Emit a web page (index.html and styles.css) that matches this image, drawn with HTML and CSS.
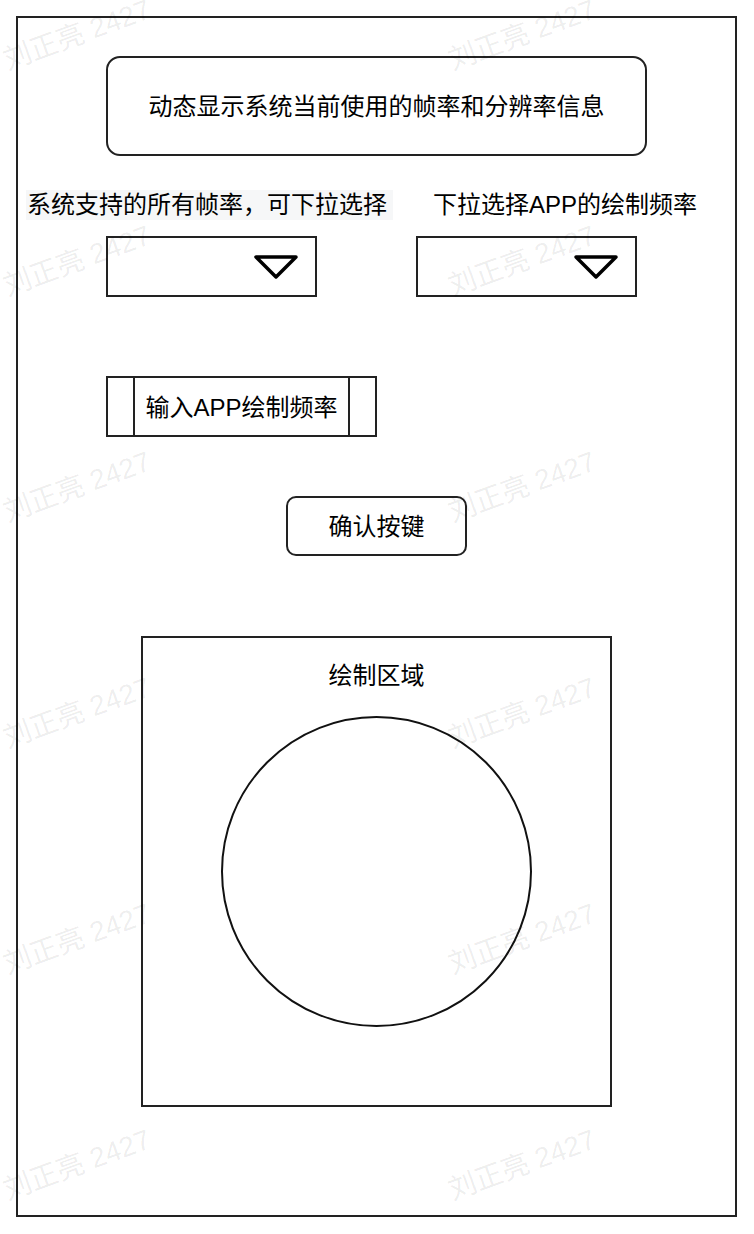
FILE: index.html
```html
<!DOCTYPE html>
<html lang="zh-CN">
<head>
    <meta charset="UTF-8">
    <meta name="viewport" content="width=device-width, initial-scale=1.0">
    <title>帧率设置</title>
    <link rel="stylesheet" href="styles.css">
</head>
<body>
    <div class="frame">
        <div class="title-box">动态显示系统当前使用的帧率和分辨率信息</div>

        <div class="label-row">
            <span class="label label-left">系统支持的所有帧率，可下拉选择</span>
            <span class="label label-right">下拉选择APP的绘制频率</span>
        </div>

        <div class="select-row">
            <div class="select select-left">
                <svg class="arrow" width="46" height="26" viewBox="0 0 46 26">
                    <polygon points="3,3 43,3 23,23" fill="none" stroke="#000" stroke-width="3.5" stroke-linejoin="round"/>
                </svg>
            </div>
            <div class="select select-right">
                <svg class="arrow" width="46" height="26" viewBox="0 0 46 26">
                    <polygon points="3,3 43,3 23,23" fill="none" stroke="#000" stroke-width="3.5" stroke-linejoin="round"/>
                </svg>
            </div>
        </div>

        <div class="input-box">
            <span class="side"></span>
            <span class="input-text">输入APP绘制频率</span>
            <span class="side"></span>
        </div>

        <button class="confirm">确认按键</button>

        <div class="draw-area">
            <span class="draw-label">绘制区域</span>
            <div class="circle"></div>
        </div>
    </div>

    <div class="watermarks">
        <span class="wm">刘正亮 2427</span><span class="wm">刘正亮 2427</span>
        <span class="wm">刘正亮 2427</span><span class="wm">刘正亮 2427</span>
        <span class="wm">刘正亮 2427</span><span class="wm">刘正亮 2427</span>
        <span class="wm">刘正亮 2427</span><span class="wm">刘正亮 2427</span>
        <span class="wm">刘正亮 2427</span><span class="wm">刘正亮 2427</span>
        <span class="wm">刘正亮 2427</span><span class="wm">刘正亮 2427</span>
    </div>
</body>
</html>
```

FILE: styles.css
```css
body {
    margin: 0;
    padding: 16px;
    background-color: #fff;
    color: #000;
    font-family: "Liberation Sans", "Noto Sans CJK SC", sans-serif;
    font-size: 24px;
    position: relative;
    min-height: 1234px;
    box-sizing: border-box;
}

.frame {
    width: 721px;
    height: 1201px;
    box-sizing: border-box;
    border: 2px solid #222;
    display: flex;
    flex-direction: column;
}

.title-box {
    align-self: center;
    margin-top: 38px;
    width: 541px;
    height: 100px;
    box-sizing: border-box;
    border: 2px solid #222;
    border-radius: 14px;
    display: flex;
    align-items: center;
    justify-content: center;
    padding-bottom: 3px;
}

.label-row {
    display: flex;
    margin-top: 34px;
    line-height: 30px;
    height: 30px;
}

.label {
    white-space: nowrap;
}

.label-left {
    margin-left: 8px;
    padding: 0 6px 0 1px;
    background-color: #f6f7f8;
}

.label-right {
    margin-left: 40px;
}

.select-row {
    display: flex;
    margin-top: 16px;
}

.select {
    height: 61px;
    box-sizing: border-box;
    border: 2px solid #222;
    display: flex;
    align-items: center;
    justify-content: flex-end;
    padding-right: 16px;
}

.select-left {
    margin-left: 88px;
    width: 211px;
}

.select-right {
    margin-left: 99px;
    width: 221px;
}

.arrow {
    display: block;
}

.input-box {
    margin-top: 79px;
    margin-left: 88px;
    width: 271px;
    height: 61px;
    box-sizing: border-box;
    border: 2px solid #222;
    display: grid;
    grid-template-columns: 27px 1fr 27px;
}

.side:first-child {
    border-right: 2px solid #222;
}

.side:last-child {
    border-left: 2px solid #222;
}

.input-text {
    display: flex;
    align-items: center;
    justify-content: center;
    white-space: nowrap;
    padding-bottom: 2px;
}

.confirm {
    align-self: center;
    margin-top: 59px;
    width: 181px;
    height: 60px;
    box-sizing: border-box;
    border: 2px solid #222;
    border-radius: 10px;
    background: #fff;
    color: #000;
    font-family: inherit;
    font-size: 24px;
    padding: 0 0 3px;
}

.draw-area {
    align-self: center;
    margin-top: 80px;
    width: 471px;
    height: 471px;
    box-sizing: border-box;
    border: 2px solid #222;
    display: grid;
    place-items: center;
}

.draw-label,
.circle {
    grid-area: 1 / 1;
}

.draw-label {
    align-self: start;
    margin-top: 23px;
    line-height: 30px;
}

.circle {
    width: 311px;
    height: 311px;
    box-sizing: border-box;
    border: 2px solid #111;
    border-radius: 50%;
}

.watermarks {
    position: absolute;
    top: 0;
    left: 0;
    width: 754px;
    height: 1234px;
    padding: 22px 0 0 0;
    box-sizing: border-box;
    display: grid;
    grid-template-columns: 445px 300px;
    grid-auto-rows: 226px;
    align-items: start;
    justify-items: start;
    pointer-events: none;
    overflow: hidden;
}

.wm {
    display: block;
    width: 155px;
    line-height: 26px;
    font-size: 28px;
    white-space: nowrap;
    color: rgba(0, 0, 0, 0.08);
    transform: rotate(-20deg);
    transform-origin: center;
}
```
